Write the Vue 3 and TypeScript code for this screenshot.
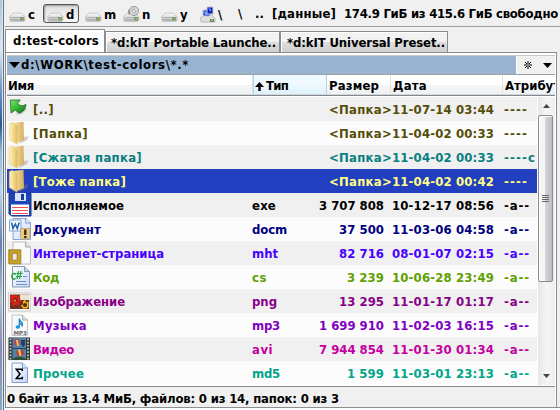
<script setup lang="ts">
import type { Directive } from 'vue'

interface Entry { icon: string; name: string; nw: number; ext?: string; ew?: number; size: string; sw: number; date: string; attr: string; aw: number; color: string }

// Tracks a label so that it takes the given column width in pixels.
const vFit: Directive<HTMLElement, number | undefined> = {
  mounted(el, binding) {
    const n = (el.textContent ?? '').length
    if (!binding.value || n < 2) return
    const w = el.getBoundingClientRect().width
    el.style.letterSpacing = `${(binding.value - w) / n}px`
  },
}

const drives = [
  { label: 'c', kind: 'disk' }, { label: 'd', kind: 'disk' }, { label: 'm', kind: 'disk' },
  { label: 'n', kind: 'disc' }, { label: 'y', kind: 'disk' }, { label: '\\', kind: 'net' },
]

const entries: Entry[] = [
  { icon: 'up', name: '[..]', nw: 21, size: '<Папка>', sw: 63, date: '11-07-14 03:44', attr: '----', aw: 24, color: '#554d08' },
  { icon: 'folder', name: '[Папка]', nw: 55, size: '<Папка>', sw: 63, date: '11-04-02 00:33', attr: '----', aw: 24, color: '#554d08' },
  { icon: 'folder', name: '[Сжатая папка]', nw: 109, size: '<Папка>', sw: 63, date: '11-04-02 00:33', attr: '----c', aw: 32, color: '#088080' },
  { icon: 'folder', name: '[Тоже папка]', nw: 93, size: '<Папка>', sw: 63, date: '11-04-02 00:42', attr: '----', aw: 24, color: '#ffff88' },
  { icon: 'floppy', name: 'Исполняемое', nw: 91, ext: 'exe', ew: 24, size: '3 707 808', sw: 65, date: '10-12-17 08:56', attr: '-a--', aw: 26, color: '#000000' },
  { icon: 'word', name: 'Документ', nw: 68, ext: 'docm', ew: 35, size: '37 500', sw: 45, date: '11-03-06 04:58', attr: '-a--', aw: 26, color: '#000080' },
  { icon: 'web', name: 'Интернет-страница', nw: 131, ext: 'mht', ew: 26, size: '82 716', sw: 45, date: '08-01-07 02:15', attr: '-a--', aw: 26, color: '#4800ff' },
  { icon: 'code', name: 'Код', nw: 26, ext: 'cs', ew: 15, size: '3 239', sw: 37, date: '10-06-28 23:49', attr: '-a--', aw: 26, color: '#60a000' },
  { icon: 'image', name: 'Изображение', nw: 92, ext: 'png', ew: 25, size: '13 295', sw: 45, date: '11-01-17 01:17', attr: '-a--', aw: 26, color: '#880088' },
  { icon: 'music', name: 'Музыка', nw: 54, ext: 'mp3', ew: 28, size: '1 699 910', sw: 65, date: '11-02-03 16:15', attr: '-a--', aw: 26, color: '#8000c0' },
  { icon: 'video', name: 'Видео', nw: 41, ext: 'avi', ew: 21, size: '7 944 854', sw: 65, date: '11-01-30 01:34', attr: '-a--', aw: 26, color: '#c400a0' },
  { icon: 'sum', name: 'Прочее', nw: 51, ext: 'md5', ew: 28, size: '1 599', sw: 37, date: '11-03-01 23:13', attr: '-a--', aw: 26, color: '#00a58a' },
]
</script>

<template>
  <div class="window">
    <div class="edge"></div>
    <main class="pane">
      <header class="toolbar">
        <div v-for="(d, i) in drives" :key="i" class="drive" :class="{ pressed: i === 1 }">
          <svg width="17" height="18" viewBox="0 0 17 18">
            <defs>
              <linearGradient id="metal" x2="0" y2="1"><stop stop-color="#fff" /><stop offset="1" stop-color="#b5b5b5" /></linearGradient>
            </defs>
            <g v-if="d.kind !== 'net'">
              <path d="M.8 10.5 4 7.2h8.500l3.500 3.300v3.500q0 1.300-2 1.300H2.800q-2 0-2-1.300z" fill="url(#metal)" stroke="#b0b0b0" stroke-width=".7" />
              <path d="M2 11.500h9M2 13.500h8" stroke="#a5a5a5" stroke-width=".7" />
              <path d="M11 11h4v3.500h-4z" fill="#8c8c8c" /><path d="M12.300 11.800h2v1.900h-2z" fill="#70d622" />
            </g>
            <g v-if="d.kind === 'disc'">
              <circle cx="11" cy="5" r="4.6" fill="#ddd" stroke="#999" />
              <path d="M8 2 14 8M11 1v8M7 5h8" stroke="#bbb" /><circle cx="11" cy="5" r="1.5" fill="#fff" stroke="#888" stroke-width=".6" />
              <path d="M5 8V4l2-1v6z" fill="#999" />
            </g>
            <g v-if="d.kind === 'net'">
              <path d="M1 12 5 9h8l3 3v4H2z" fill="#ddd" stroke="#aaa" stroke-width=".7" />
              <path d="M4 4h7v6H4z" fill="#1431c8" stroke="#c6cbd8" /><path d="M8 1h6v7H8z" fill="#0724b5" stroke="#c6cbd8" />
              <path d="m5 5 3 1v3H6zM9 2l3 1v3z" fill="#7b9eff" /><path d="M11 13h4v3h-4z" fill="#777" /><path d="M12 13h2v2h-2z" fill="#70d622" />
            </g>
          </svg>
          <span>{{ d.label }}</span>
        </div>
        <span class="root">\</span>
        <span class="parent">..</span>
        <span class="volume"><span v-fit="64">[данные]</span></span>
        <span class="space"><span v-fit="214">174.9 ГиБ из 415.6 ГиБ свободно</span></span>
      </header>

      <nav class="tabs">
        <div class="tab active"><span v-fit="86">d:test-colors</span></div>
        <div class="tab"><span v-fit="165">*d:kIT Portable Launche..</span></div>
        <div class="tab last"><span v-fit="158">*d:kIT Universal Preset..</span></div>
      </nav>

      <section class="panel">
        <div class="path">
          <div class="location">
            <svg width="11" height="6" viewBox="0 0 11 6"><path d="M0 0h11L5.5 6z" /></svg>
            <span v-fit="168">d:\WORK\test-colors\*.*</span>
          </div>
          <svg class="star" width="8" height="8" viewBox="0 0 8 8"><path d="M4 0v8M0 4h8M1 1l6 6M7 1 1 7" stroke="#000" /><path d="M3.300 3.300h1.400v1.400H3.300z" fill="#fff" /></svg>
          <svg class="history" width="9" height="5" viewBox="0 0 9 5"><path d="M0 0h9L4.500 5z" /></svg>
        </div>
        <div class="head">
          <div class="h name"><span v-fit="26">Имя</span></div>
          <div class="h sorted">
            <svg width="9" height="9" viewBox="0 0 9 9"><path d="M4.500 0 9 5H5.700v4H3.300V5H0z" /></svg>
            <span v-fit="22">Тип</span>
          </div>
          <div class="h"><span v-fit="50">Размер</span></div>
          <div class="h"><span v-fit="34">Дата</span></div>
          <div class="h attrs"><span v-fit="55">Атрибут</span></div>
        </div>

        <div class="list">
          <div class="rows">
            <div v-for="(e, i) in entries" :key="i" class="row" :class="{ selected: i === 3 }" :style="{ color: e.color }">
              <svg class="icon" width="24" height="24" viewBox="0 0 24 24">
                <defs>
                  <linearGradient id="gold"><stop stop-color="#fff3b8" /><stop offset=".6" stop-color="#f0d583" /><stop offset="1" stop-color="#dcb75c" /></linearGradient>
                  <linearGradient id="back"><stop stop-color="#f8e7ae" /><stop offset="1" stop-color="#d5b05c" /></linearGradient>
                  <linearGradient id="green" x2="1" y2="1"><stop stop-color="#78e662" /><stop offset=".5" stop-color="#35b936" /><stop offset="1" stop-color="#0b6619" /></linearGradient>
                  <linearGradient id="sheet" x2="1" y2="1"><stop stop-color="#fff" /><stop offset="1" stop-color="#c6d9fb" /></linearGradient>
                </defs>
                <g v-if="e.icon === 'up'">
                  <path d="M9 15q6 1 9-5l.5 3-5 4-5 1z" fill="#aaa" opacity=".6" />
                  <path d="M2.300 3h10L9.500 6.300q3 4 8.500 1.200-.5 6-6 8.500-3-.3-4.500-3L3 16z" fill="url(#green)" stroke="#286b26" stroke-width=".8" />
                </g>
                <g v-else-if="e.icon === 'folder'">
                  <path d="m15 16 5.500-.5L19 19l-8 4z" fill="#888" opacity=".4" />
                  <path d="m5 2 10.500-1.300.5 18.600L9 22z" fill="url(#back)" />
                  <path d="M1.300 2.500 4.500 1.300l5 4-.5 18-7.700-4.800z" fill="url(#gold)" stroke="#e4c777" stroke-width=".5" />
                </g>
                <g v-else-if="e.icon === 'floppy'">
                  <path d="M1 .5h22v22.500H4l-3-2z" fill="#1c46b8" stroke="#16358f" />
                  <path d="M7 0h11v8H7z" fill="#dce5f6" /><path d="M13 1h3v6h-3z" fill="#173b9d" />
                  <path d="M3 11.500h18V22H3z" fill="#fff" /><path d="M4 14.500h16M4 17.500h16M4 20.500h16" stroke="#ed5050" />
                </g>
                <g v-else-if="e.icon === 'word'">
                  <path d="M5 1.500h13l4.500 4v17H5z" fill="url(#sheet)" stroke="#8aa6d4" /><path d="M17.500 1.500v4.500h5" fill="#e7f1ff" stroke="#799acf" />
                  <path d="M1.500 3h11.500v11H1.500z" fill="#f8fbff" stroke="#7ba3d2" /><path d="M3.500 5.500 5 11.500 7.300 7l2 4.500L11.200 5.500" fill="none" stroke="#2465b1" stroke-width="1.600" />
                  <path d="M12.500 11.500h9.500V20l-4.500 3-5-2z" fill="#eac98c" stroke="#b39155" stroke-width=".6" /><path d="M17.300 12.500v5.500M17.300 19v2.200" stroke="#352000" stroke-width="2.200" />
                </g>
                <g v-else-if="e.icon === 'web'">
                  <path d="M5 1h12.500l5 5v17H5z" fill="#f9f9f9" stroke="#b5b5b5" stroke-width=".8" /><path d="M17.500 1v5h5" fill="#ddd" stroke="#999" stroke-width=".8" />
                  <path d="M2.500 10.500h8.500V21H2.500z" fill="#e8e8e6" stroke="#cba221" stroke-width="3.200" /><path d="M.8 8.800h12v14H.8zM4.200 12.200h5v7h-5z" fill="none" stroke="#8b6b0c" stroke-width=".8" />
                </g>
                <g v-else-if="e.icon === 'code'">
                  <path d="M4.500 1.500h12l5 5v15.500h-17z" fill="url(#sheet)" stroke="#8598b7" /><path d="M16.500 1.500v5h5" fill="#bfd1ed" stroke="#8598b7" />
                  <path d="M8 9.300q-3.500-2-4 1.500-.3 4.500 3.500 2.700" fill="none" stroke="#24a23b" stroke-width="1.600" /><path d="M10.500 6 9 14M13 6l-1.500 8M8.500 8.500h6M8 11.500h6" fill="none" stroke="#24a23b" stroke-width="1.200" />
                  <path d="M8 16.500h10M8 19.500h11M15 11.500h4" stroke="#6f8fbe" />
                </g>
                <g v-else-if="e.icon === 'image'" transform="translate(0 1.500)">
                  <path d="M.8 2.500h21.400v18H.8z" fill="#fff" stroke="#c4c4c4" /><path d="M2 4h19v14.500H2z" fill="#70321c" /><path d="M12 4h9v5.500h-9z" fill="#ebe5cf" />
                  <path d="m8 4 1 2 3-1-1 3 3 2-3 2 0 3-3-1-3 2-1-4-2-1 1-3-1-3h3z" fill="#db2315" /><circle cx="7.500" cy="9.500" r="2.300" fill="#822" /><circle cx="7" cy="10" r="1" fill="#f4a428" />
                  <path d="m17 9 1 3 2.500-1v5l-1.500 2h-4l-2-3 2-1v-3z" fill="#f0b615" /><circle cx="17" cy="14.500" r="2" fill="#472c10" />
                </g>
                <g v-else-if="e.icon === 'music'">
                  <path d="M4 2h10.500l5 5v15.500H4z" fill="#fafafa" stroke="#c2c2c2" /><path d="M14.500 2v5h5" fill="#ddd" stroke="#aaa" />
                  <path d="M11.300 5.500V14M11.300 6q.5 2 3 4v3.500q0-2.500-3-3.500" fill="none" stroke="#1683c4" stroke-width="1.300" /><ellipse cx="9.800" cy="14" rx="2.200" ry="1.700" fill="#1899de" />
                  <text x="5.500" y="21.500" class="tiny">MP3</text>
                </g>
                <g v-else-if="e.icon === 'video'">
                  <path d="M.5 .5h21.500v22.500H.5z" fill="#32383a" /><path d="M4.500 1h13.500v22H4.500z" fill="#5183aa" /><path d="M4.500 11.500h13.500" stroke="#263e4e" />
                  <path d="M2.500 1.500v21M20 1.500v21" stroke="#c5caca" stroke-width="1.700" stroke-dasharray="1.700 1.500" />
                  <path d="M6 6q0-4 3-4t3 4l-2 3H8z" fill="#ba4141" /><path d="M13 3h4v5l-2 2-2-3z" fill="#293c5d" /><path d="M8 3h2l1 6H9z" fill="#edc568" />
                  <ellipse cx="12" cy="16" rx="3.800" ry="3.300" fill="#b74537" /><path d="m10 13 2-1 1.500 7h-2z" fill="#f0c367" /><path d="M4.500 21.500q7-4 13.500 0V23h-13.500z" fill="#334e37" />
                </g>
                <g v-else>
                  <path d="M4 2h10.500l5 5v14.500H4z" fill="url(#sheet)" stroke="#829cc8" /><path d="M14.500 2v5h5" fill="#d9e5fa" stroke="#829cc8" />
                  <path d="M14.300 10V8.300H8.300l3.700 4.700-3.700 4.500h6v-1.800" fill="none" stroke="#000" stroke-width="1.500" />
                </g>
              </svg>
              <span class="cell"><span v-fit="e.nw">{{ e.name }}</span></span>
              <span class="cell"><span v-fit="e.ew">{{ e.ext }}</span></span>
              <span class="cell size" :class="{ dir: !e.ext }"><span v-fit="e.sw">{{ e.size }}</span></span>
              <span class="cell"><span v-fit="102">{{ e.date }}</span></span>
              <span class="cell"><span v-fit="e.aw">{{ e.attr }}</span></span>
            </div>
          </div>
          <div class="scrollbar">
            <div class="arrow"><svg width="7" height="4" viewBox="0 0 7 4"><path d="m0 4 3.500-4L7 4z" fill="#444" /></svg></div>
            <div class="thumb"><i></i><i></i><i></i><i></i></div>
            <div class="arrow down"><svg width="7" height="4" viewBox="0 0 7 4"><path d="M0 0h7L3.500 4z" fill="#444" /></svg></div>
          </div>
        </div>
        <footer class="status"><span v-fit="332">0 байт из 13.4 МиБ, файлов: 0 из 14, папок: 0 из 3</span></footer>
      </section>
      <div class="bottom"></div>
    </main>
  </div>
</template>

<style>
body { margin: 0; overflow: hidden; }
</style>

<style scoped>
* { box-sizing: border-box; }
.window { width: 560px; height: 410px; display: flex; background: #f0f0f0; font: bold 13px/18px "DejaVu Sans Condensed", "DejaVu Sans", sans-serif; font-stretch: condensed; color: #000; white-space: pre; overflow: hidden; }
.window svg { display: block; flex: none; }
.edge { width: 5px; flex: none; background: linear-gradient(90deg, transparent 0 2px, #dce7ef 2px 3px, #68717d 3px 4px, #f0f0f0 4px), linear-gradient(#a9c5df, #dce9f1 50px, #648bc0 95px, #285b98 125px, #8fbad9 150px, #b8d7ea 190px, #6580b1 245px, #afbfce 300px, #8c89ba 345px, #82afc5); }
.pane { width: 555px; flex: none; display: flex; flex-direction: column; }
.toolbar { height: 27px; flex: none; display: flex; border-bottom: 1px solid #a0a0a0; padding: 4px 0 0 0; }
.drive { width: 38px; height: 19px; display: flex; gap: 2px; padding-left: 3px; border: 1px solid transparent; line-height: 17px; }
.drive svg { margin-top: 1px; }
.drive span { padding-top: 1px; }
.drive.pressed { width: 36px; margin-right: 2px; border-color: #555; border-radius: 3px; background: linear-gradient(#ddd, #fafafa); box-shadow: inset 1px 1px 2px #999; }
.root { margin-left: 5px; width: 17px; padding-top: 1px; }
.parent { width: 17px; padding-top: 1px; }
.volume { width: 72px; padding-top: 1px; }
.space { padding-top: 1px; }
.tabs { height: 25px; display: flex; align-items: flex-end; flex: none; padding-left: 0; }
.tab { height: 21px; width: 175px; background: linear-gradient(#f2f2f2 0 48%, #dedede 50%, #d0d0d0); border: 1px solid #898c95; border-bottom: 0; padding: 2px 0 0 5px; box-shadow: inset 1px 1px #fff; }
.tab.active { width: 100px; height: 23px; background: #fff; padding: 2px 0 0 7px; }
.tab.last { width: 168px; padding-left: 6px; }
.panel { width: 552px; height: 355px; flex: none; border: 1px solid #898c95; border-bottom: 0; padding: 2px 1px 0 1px; display: flex; flex-direction: column; background: #fff; }
.path { height: 20px; flex: none; display: flex; align-items: center; background: #f0f0f0; border-top: 1px solid #c8c8c8; border-bottom: 1px solid #a0a0a0; }
.location { display: flex; align-items: center; width: 510px; height: 18px; background: #99b4d1; padding-left: 2px; gap: 1px; border-right: 1px solid #fff; }
.star { margin-left: 7px; }
.history { margin-left: 11px; }
.head { height: 20px; flex: none; display: grid; grid-template-columns: 246px 74px 64px 112px 52px; background: linear-gradient(#fff 0 50%, #f4f5f7 51%, #f0f2f4); overflow: hidden; border-bottom: 1px solid #d5d5d5; }
.h { padding: 2px 0 0 2px; border-right: 1px solid #dfe3e6; overflow: hidden; }
.h.attrs { border: 0; }
.h.name { padding-left: 1px; }
.sorted { display: flex; gap: 2px; padding-left: 1px; border-left: 1px solid #a8dcf3; border-right-color: #9bd9f5; background: linear-gradient(#eff9fe 0 45%, #dff1fa); }
.sorted svg { margin-top: 5px; }
.list { height: 292px; flex: none; display: flex; border-top: 1px solid #808892; border-bottom: 1px solid #808892; padding-top: 1px; padding-bottom: 1px; background: #fff; }
.rows { width: 531px; height: 288px; overflow: hidden; }
.row { height: 24px; display: grid; grid-template-columns: 25px 219px 61px 79px 112px 34px; background: #fcfcfc; padding-left: 1px; }
.row:nth-child(odd) { background: #f0f0f0; }
.row.selected { background: #213fbe; }
.cell { display: block; padding-top: 4px; min-width: 0; height: 24px; }
.cell.size { text-align: right; padding-right: 8px; }
.cell.size.dir { padding-right: 0; }
.tiny { font: bold 5.5px "DejaVu Sans", sans-serif; fill: #666; }
.scrollbar { width: 17px; height: 288px; margin-left: 1px; flex: none; display: flex; flex-direction: column; background: linear-gradient(90deg, #e6e6e6, #f5f5f5 50%, #efefef); }
.arrow { height: 18px; display: flex; align-items: center; justify-content: center; flex: none; }
.thumb { height: 167px; width: 15px; flex: none; border: 1px solid #8b8b8b; border-radius: 2px; background: linear-gradient(90deg, #f5f5f5 45%, #d5d5d9 50%, #bcbcc2); display: flex; flex-direction: column; gap: 1px; align-items: center; justify-content: center; box-shadow: inset 1px 1px #fff; }
.thumb i { width: 7px; height: 1px; background: #666; }
.arrow.down { margin-top: auto; }
.status { height: 20px; padding: 3px 0 0 0; background: #f0f0f0; flex: none; line-height: 17px; }
.bottom { border-top: 1px solid #8f8f8f; height: 3px; background: #fff; }
</style>
